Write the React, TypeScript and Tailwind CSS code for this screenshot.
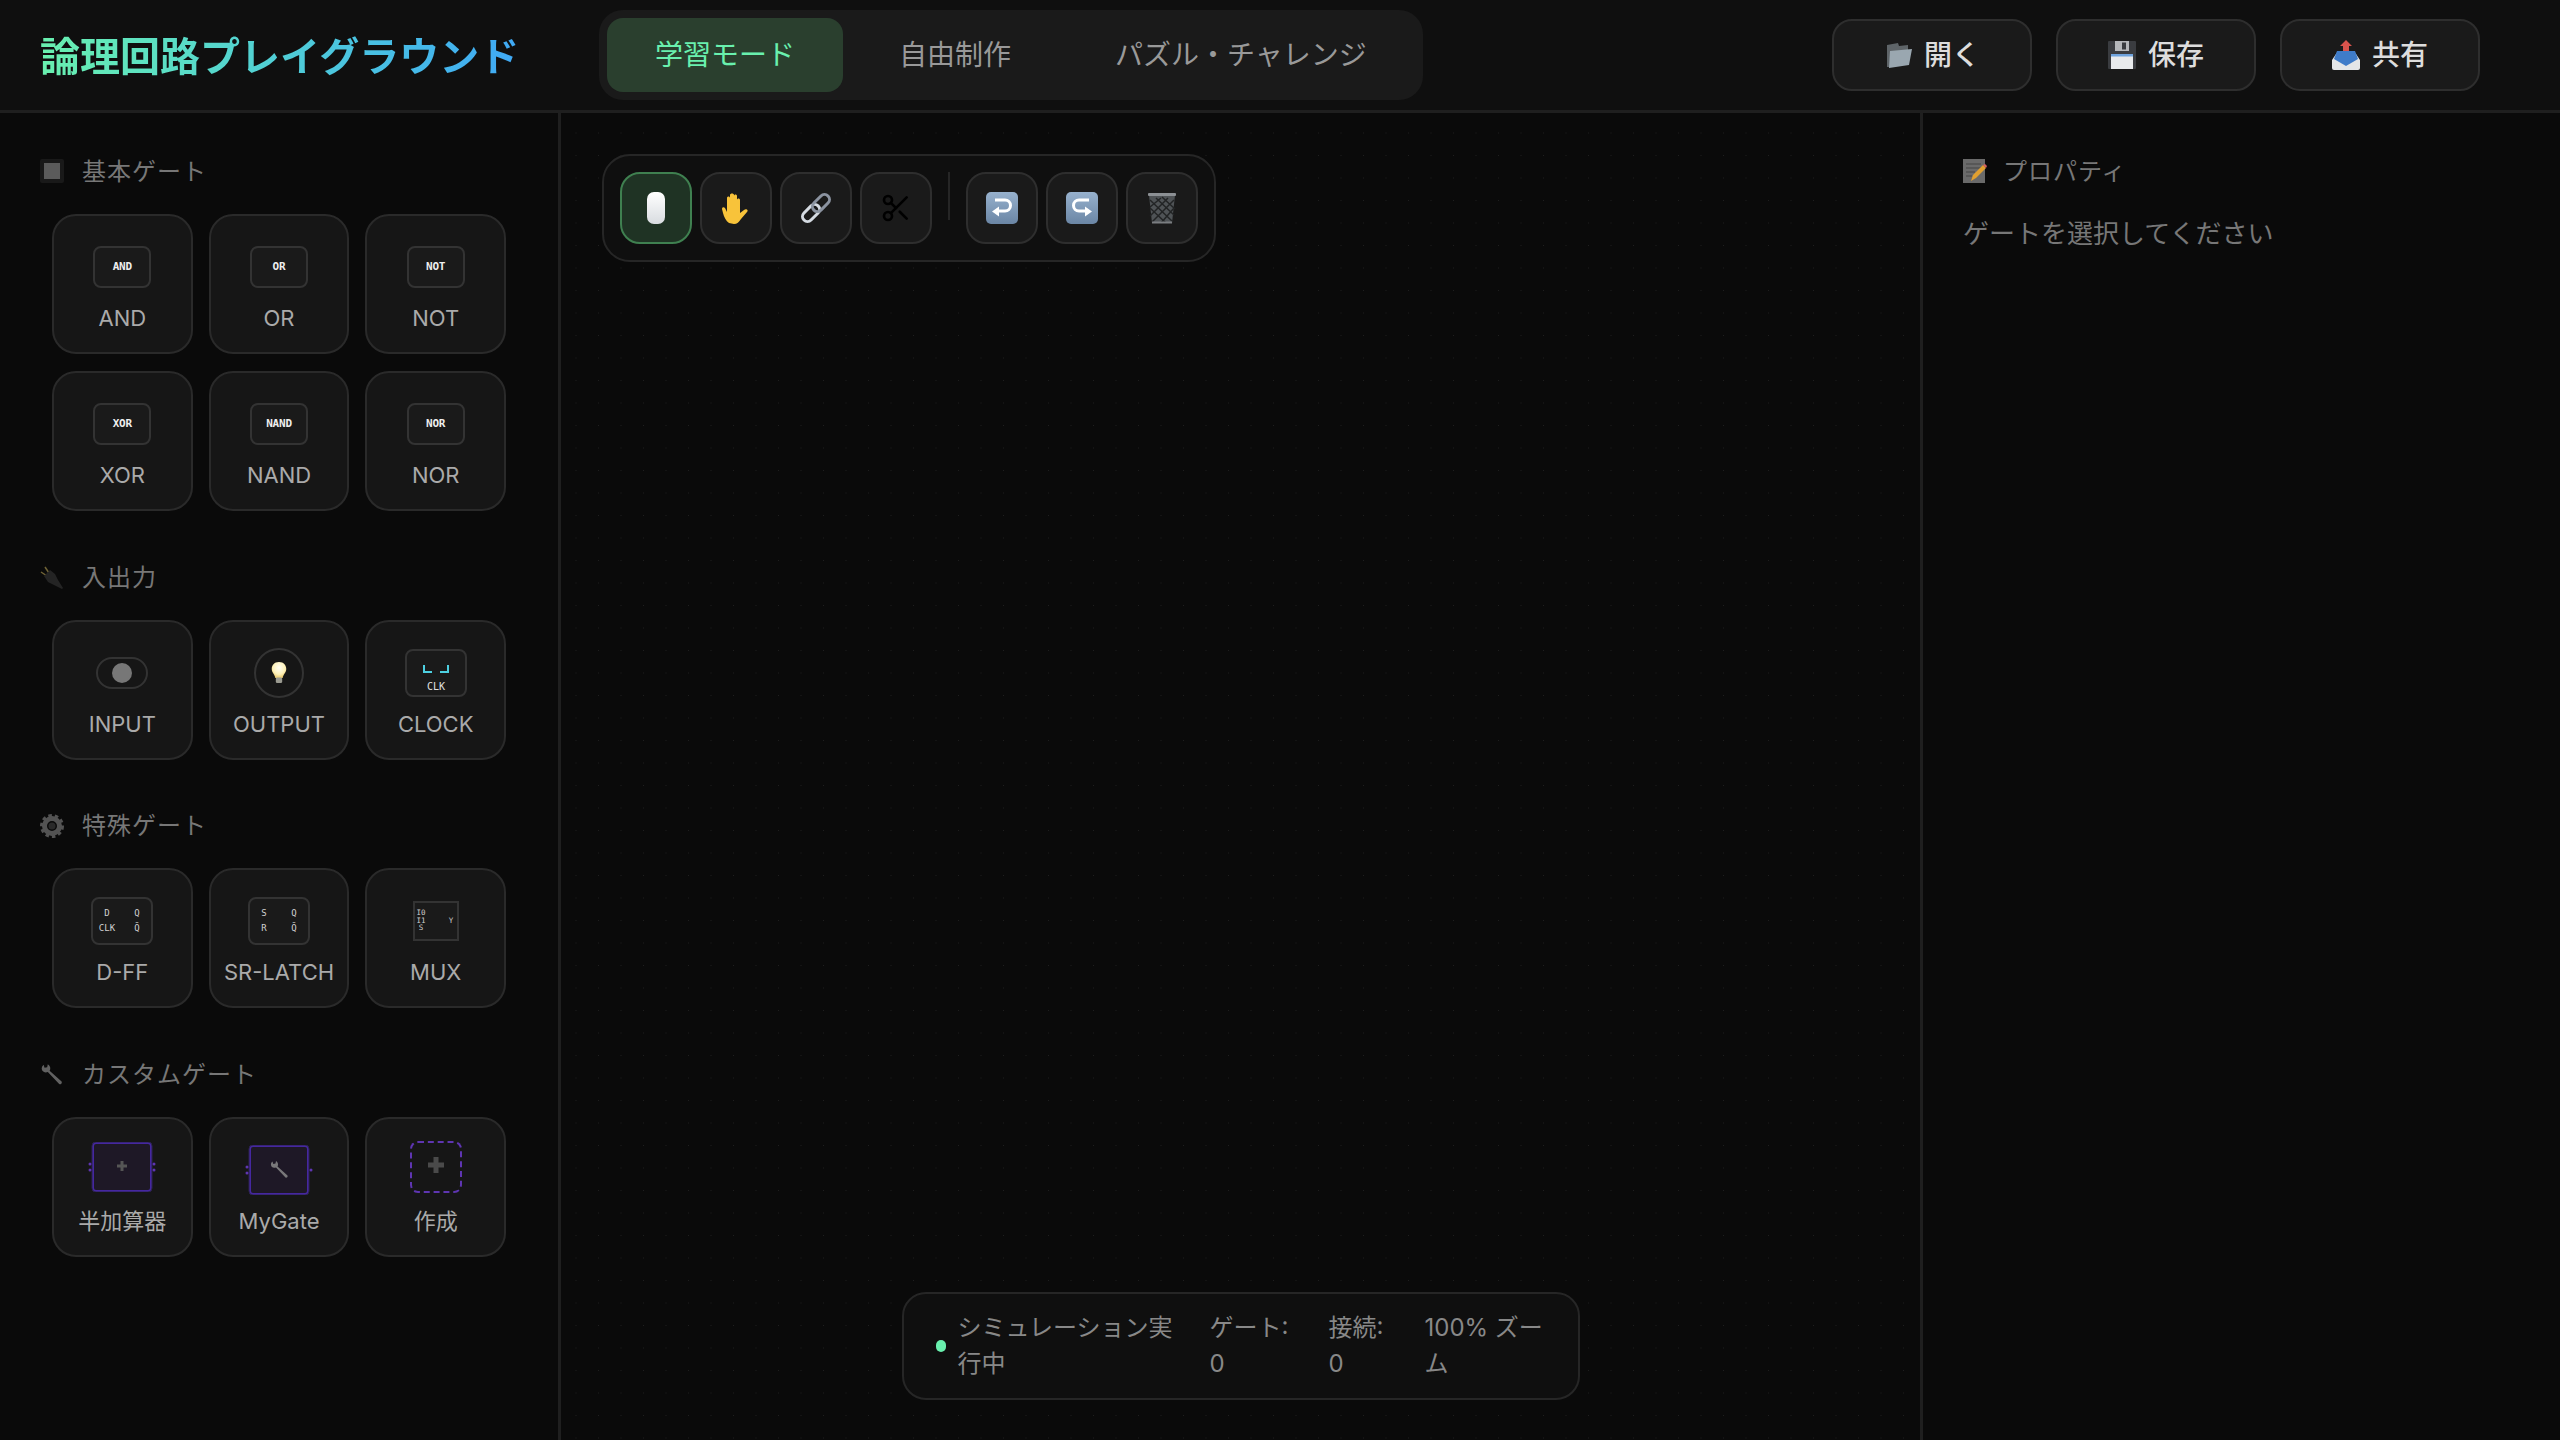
import React from "react";
import { Scissors } from "lucide-react";

const FONT = 'Inter, "Noto Sans CJK JP", sans-serif';

type Gate = { label: string; icon: React.ReactNode };

const TextBox = ({ text }: { text: string }) => (
  <div className="flex h-[42px] w-[58px] items-center justify-center rounded-lg border-2 border-[#333333] bg-[#1a1a1a] font-['DejaVu_Sans_Mono',monospace] text-[11px] font-bold tracking-[-0.2px] text-[#eeeeee]">
    {text}
  </div>
);

const ToggleIcon = () => (
  <div className="flex h-[32px] w-[52px] items-center justify-center rounded-full border-2 border-[#333333]">
    <div className="h-[20px] w-[20px] rounded-full bg-[#777777]" />
  </div>
);

const BulbEmoji = () => (
  <svg width="20" height="24" viewBox="0 0 22 26">
    <defs>
      <radialGradient id="bulb" cx="50%" cy="35%" r="60%">
        <stop offset="0%" stopColor="#fffef5" />
        <stop offset="70%" stopColor="#fdf0b8" />
        <stop offset="100%" stopColor="#efd27a" />
      </radialGradient>
    </defs>
    <path d="M11 1C5.500 1 3 5 3 8.500c0 4 3.500 6 4 10h8c.5-4 4-6 4-10C19 5 16.500 1 11 1z" fill="url(#bulb)" />
    <rect x="7.500" y="18" width="7" height="6" rx="1.500" fill="#9a9a90" />
  </svg>
);

const OutputIcon = () => (
  <div className="flex h-[50px] w-[50px] items-center justify-center rounded-full border-2 border-[#333333]">
    <BulbEmoji />
  </div>
);

const ClockIcon = () => (
  <svg width="62" height="48" viewBox="0 0 62 48">
    <rect x="1" y="1" width="60" height="46" rx="7" fill="#1a1a1a" stroke="#333333" strokeWidth="2" />
    <path d="M19 16v7h8M35 23h8v-7" fill="none" stroke="#4dd0e1" strokeWidth="2" />
    <text x="31" y="41" textAnchor="middle" fontSize="10" fontFamily="DejaVu Sans Mono, monospace" fill="#e0e0e0">CLK</text>
  </svg>
);

const FlipFlopIcon = ({ a, b }: { a: string; b: string }) => (
  <svg width="62" height="48" viewBox="0 0 62 48" fontFamily="DejaVu Sans Mono, monospace" fontSize="9" fill="#d0d0d0" textAnchor="middle">
    <rect x="1" y="1" width="60" height="46" rx="7" fill="#1a1a1a" stroke="#333333" strokeWidth="2" />
    <text x="16" y="19">{a}</text>
    <text x="46" y="19">Q</text>
    <text x="16" y="34">{b}</text>
    <text x="46" y="34">Q̄</text>
  </svg>
);

const MuxIcon = () => (
  <svg width="46" height="40" viewBox="0 0 46 40" fontFamily="DejaVu Sans Mono, monospace" fontSize="7.500" fill="#d0d0d0" textAnchor="middle">
    <rect x="1" y="1" width="44" height="38" fill="#1a1a1a" stroke="#333333" strokeWidth="2" />
    <text x="8" y="14">I0</text>
    <text x="8" y="22">I1</text>
    <text x="8" y="29">S</text>
    <text x="38" y="22">Y</text>
  </svg>
);

const WrenchShape = ({ color }: { color: string }) => (
  <path d="M3 1.500a4 4 0 0 0-1 5 4 4 0 0 0 4.500 1L16 17.500a1.500 1.500 0 0 0 2-2L8 6.500A4 4 0 0 0 6.500 1L6 3.500 3.800 4z" fill={color} />
);

const HalfAdderIcon = () => (
  <svg width="68" height="50" viewBox="0 0 68 50" className="-translate-y-[3px]">
    <rect x="5" y="1" width="58" height="48" rx="3" fill="#1e1826" stroke="#4527a0" strokeWidth="2" />
    <rect x="4" y="0" width="60" height="50" rx="4" fill="none" stroke="#2c2350" strokeWidth="1" />
    <circle cx="2" cy="22" r="1.500" fill="#5e35b1" />
    <circle cx="2" cy="28" r="1.500" fill="#5e35b1" />
    <circle cx="66" cy="22" r="1.500" fill="#5e35b1" />
    <circle cx="66" cy="28" r="1.500" fill="#5e35b1" />
    <path d="M34 19v10M29 24h10" stroke="#555555" strokeWidth="3" />
  </svg>
);

const MyGateIcon = () => (
  <svg width="68" height="50" viewBox="0 0 68 50">
    <rect x="5" y="1" width="58" height="48" rx="3" fill="#1e1826" stroke="#4527a0" strokeWidth="2" />
    <rect x="4" y="0" width="60" height="50" rx="4" fill="none" stroke="#2c2350" strokeWidth="1" />
    <circle cx="2" cy="22" r="1.500" fill="#5e35b1" />
    <circle cx="2" cy="28" r="1.500" fill="#5e35b1" />
    <circle cx="66" cy="25" r="1.500" fill="#5e35b1" />
    <g transform="translate(24.500 15)" opacity="0.85">
      <WrenchShape color="#8a8a8a" />
    </g>
  </svg>
);

const CreateIcon = () => (
  <div className="flex h-[52px] w-[52px] -translate-y-[3px] items-center justify-center rounded-lg border-2 border-dashed border-[#5e35b1]">
    <svg width="18" height="18" viewBox="0 0 18 18" className="-translate-y-[2px]">
      <path d="M9 1v16M1 9h16" stroke="#4a4a4a" strokeWidth="5" />
    </svg>
  </div>
);

const sections: { title: string; icon: React.ReactNode; gates: Gate[] }[] = [
  {
    title: "基本ゲート",
    icon: (
      <svg width="24" height="24" viewBox="0 0 24 24" className="-translate-y-[1px]">
        <rect width="24" height="24" rx="2" fill="#1d1d1d" />
        <rect x="4" y="4" width="16" height="16" fill="#707070" />
      </svg>
    ),
    gates: [
      { label: "AND", icon: <TextBox text="AND" /> },
      { label: "OR", icon: <TextBox text="OR" /> },
      { label: "NOT", icon: <TextBox text="NOT" /> },
      { label: "XOR", icon: <TextBox text="XOR" /> },
      { label: "NAND", icon: <TextBox text="NAND" /> },
      { label: "NOR", icon: <TextBox text="NOR" /> },
    ],
  },
  {
    title: "入出力",
    icon: (
      <svg width="24" height="24" viewBox="0 0 24 24">
        <path d="M1 6l6 4M5 1l4 6" stroke="#8a7a40" strokeWidth="1.500" />
        <path d="M4 10l6-6 5 4 3 6 5 8-1 1-8-4-6-3z" fill="#2b2b2b" />
      </svg>
    ),
    gates: [
      { label: "INPUT", icon: <ToggleIcon /> },
      { label: "OUTPUT", icon: <OutputIcon /> },
      { label: "CLOCK", icon: <ClockIcon /> },
    ],
  },
  {
    title: "特殊ゲート",
    icon: (
      <svg width="24" height="24" viewBox="0 0 24 24">
        <circle cx="12" cy="12" r="7.500" fill="none" stroke="#666666" strokeWidth="5" />
        <circle cx="12" cy="12" r="10.500" fill="none" stroke="#666666" strokeWidth="3" strokeDasharray="3.500 3" />
        <circle cx="12" cy="12" r="3.500" fill="#333333" />
      </svg>
    ),
    gates: [
      { label: "D-FF", icon: <FlipFlopIcon a="D" b="CLK" /> },
      { label: "SR-LATCH", icon: <FlipFlopIcon a="S" b="R" /> },
      { label: "MUX", icon: <MuxIcon /> },
    ],
  },
  {
    title: "カスタムゲート",
    icon: (
      <svg width="24" height="24" viewBox="0 0 20 20">
        <WrenchShape color="#777777" />
      </svg>
    ),
    gates: [
      { label: "半加算器", icon: <HalfAdderIcon /> },
      { label: "MyGate", icon: <MyGateIcon /> },
      { label: "作成", icon: <CreateIcon /> },
    ],
  },
];

const tools: { active?: boolean; icon: React.ReactNode }[] = [
  {
    active: true,
    icon: (
      <svg width="18" height="32" viewBox="0 0 18 32">
        <defs>
          <linearGradient id="mouse" x1="0" y1="0" x2="0" y2="1">
            <stop offset="0%" stopColor="#ffffff" />
            <stop offset="100%" stopColor="#d8dce0" />
          </linearGradient>
        </defs>
        <rect width="18" height="32" rx="7" fill="url(#mouse)" />
      </svg>
    ),
  },
  {
    icon: (
      <svg width="30" height="32" viewBox="0 0 30 32">
        <path
          d="M8 31c-3-2-5-6-6-10l-1-4c0-2 2-2 3-1l2 4V6c0-2 3-2 3 0v8V3c0-2 4-2 4 0v11V4c0-2 3-2 3 0v11-7c0-2 3-2 3 0v13l4-3c2-2 5 0 3 2l-6 7c-2 3-4 5-7 5z"
          fill="#f8c33a"
        />
      </svg>
    ),
  },
  {
    icon: (
      <svg width="32" height="32" viewBox="0 0 32 32" fill="none">
        <g transform="rotate(-45 16 16)" strokeWidth="3">
          <rect x="-1" y="11" width="20" height="10" rx="5" stroke="#d5dbe2" />
          <rect x="13" y="11" width="20" height="10" rx="5" stroke="#8b93a0" />
        </g>
      </svg>
    ),
  },
  { icon: <Scissors size={32} color="#000000" strokeWidth={2} /> },
];

const BlueSquare = ({ d, head }: { d: string; head: string }) => (
  <svg width="32" height="32" viewBox="0 0 32 32">
    <defs>
      <linearGradient id="keycap" x1="0" y1="0" x2="0" y2="1">
        <stop offset="0%" stopColor="#97b1cd" />
        <stop offset="100%" stopColor="#6b86a5" />
      </linearGradient>
    </defs>
    <rect width="32" height="32" rx="5" fill="url(#keycap)" />
    <path d={d} fill="none" stroke="#ffffff" strokeWidth="3" />
    <path d={head} fill="#ffffff" />
  </svg>
);

const editTools: React.ReactNode[] = [
  <BlueSquare d="M9 8h10a5.500 5.500 0 0 1 0 11h-7" head="M6 19.500l7-5v10z" />,
  <BlueSquare d="M23 8H13a5.500 5.500 0 0 0 0 11h7" head="M26 19.500l-7-5v10z" />,
  <svg width="32" height="32" viewBox="0 0 32 32">
    <path d="M3 3h26l-3 28H6z" fill="#4f5356" />
    <path d="M4 8l23 22M10 6l18 17M16 5l13 12M4 16l16 15M28 8L6 30M22 6L4 24M15 6L4 15M28 16L15 31" stroke="#222425" strokeWidth="1.500" />
    <rect x="2" y="1" width="28" height="3" rx="1" fill="#8c9094" />
    <rect x="6" y="29.500" width="20" height="2" fill="#7a7d80" />
  </svg>,
];

const actions: { label: string; icon: React.ReactNode }[] = [
  {
    label: "開く",
    icon: (
      <svg width="28" height="28" viewBox="0 0 28 28">
        <path d="M3 4l11-2 1 3 9-1v6L5 26H3z" fill="#5e6468" />
        <path d="M6 10l22-2-3 16-20 3z" fill="#9aa7b0" />
      </svg>
    ),
  },
  {
    label: "保存",
    icon: (
      <svg width="28" height="28" viewBox="0 0 28 28">
        <rect width="28" height="28" rx="1" fill="#3a3c40" />
        <rect x="7" y="0" width="14" height="10" fill="#b5b7ba" />
        <rect x="14" y="1.500" width="4" height="7" fill="#3a3c40" />
        <rect x="3" y="13" width="22" height="15" fill="#e8eaec" />
        <rect x="3" y="13" width="22" height="2.500" fill="#6fa3dd" />
      </svg>
    ),
  },
  {
    label: "共有",
    icon: (
      <svg width="28" height="30" viewBox="0 0 28 30">
        <path d="M14 0l6 6h-3v6h-6V6H8z" fill="#d9534c" />
        <path d="M6 11h16l6 9v8a2 2 0 0 1-2 2H2a2 2 0 0 1-2-2v-8z" fill="#e4e6e8" />
        <path d="M5 11h18l3 8-12 7-12-7z" fill="#3f7cc9" />
      </svg>
    ),
  },
];

const Card = ({ gate }: { gate: Gate }) => (
  <div className="flex h-[140px] flex-col items-center rounded-3xl border-2 border-[#2a2a2a] bg-[#161616] pt-[23px]">
    <div className="flex h-[56px] items-center justify-center">{gate.icon}</div>
    <div className="mt-[5px] text-[22px] leading-[36px] text-[#aaaaaa]">{gate.label}</div>
  </div>
);

const ToolButton = ({ active, children }: { active?: boolean; children: React.ReactNode }) => (
  <div
    className={`flex h-[72px] w-[72px] items-center justify-center rounded-[20px] border-2 ${
      active ? "border-[#3f8050] bg-[#1f3324]" : "border-[#2e2e2e] bg-[#1a1a1a]"
    }`}
  >
    {children}
  </div>
);

export default function App() {
  return (
    <div className="flex h-screen w-screen flex-col overflow-hidden bg-[#0a0a0a]" style={{ fontFamily: FONT }}>
      <header className="flex h-[113px] shrink-0 items-start border-b-[3px] border-[#1f1f1f] bg-[#0f0f0f] pl-10 pr-20">
        <h1 className="mt-[33px] w-[477px] whitespace-nowrap bg-gradient-to-r from-[#69f0ae] to-[#40a9f5] bg-clip-text text-[40px] font-bold leading-[48px] text-transparent">
          論理回路プレイグラウンド
        </h1>
        <nav className="ml-[82px] mt-[10px] flex gap-2 rounded-3xl bg-[#1a1a1a] p-2 text-[28px] leading-[74px] text-[#999999]">
          <div className="rounded-2xl bg-[#2a3f2e] px-12 text-[#69f0ae]">学習モード</div>
          <div className="px-12">自由制作</div>
          <div className="px-12">パズル・チャレンジ</div>
        </nav>
        <div className="ml-auto mt-[19px] flex gap-6">
          {actions.map((a) => (
            <div
              key={a.label}
              className="flex h-[72px] w-[200px] items-center justify-center gap-3 rounded-[20px] border-2 border-[#2e2e2e] bg-[#1a1a1a] text-[28px] font-medium text-[#dddddd]"
            >
              {a.icon}
              {a.label}
            </div>
          ))}
        </div>
      </header>

      <div className="flex min-h-0 flex-1">
        <aside className="w-[561px] shrink-0 border-r-[3px] border-[#1f1f1f] bg-[#0a0a0a] px-10 pt-[41px]">
          {sections.map((s) => (
            <section key={s.title} className="mb-[48.5px]">
              <div className="mb-[24px] flex h-[36px] items-center gap-[18px] text-[24px] tracking-[1px] text-[#777777]">
                <span className="opacity-80">{s.icon}</span>
                {s.title}
              </div>
              <div className="grid grid-cols-3 gap-x-4 gap-y-[17px] px-3">
                {s.gates.map((g) => (
                  <Card key={g.label} gate={g} />
                ))}
              </div>
            </section>
          ))}
        </aside>

        <main className="relative flex-1 bg-[#0a0a0a] bg-[radial-gradient(circle,#1f1f1f_0.6px,transparent_0.9px)] bg-[size:22.5px_22.5px] bg-[position:3.75px_8.75px]">
          <div className="absolute left-[41px] top-[41px] flex items-start gap-2 rounded-[28px] border-2 border-[#262626] bg-[#0f0f0f] p-4">
            {tools.map((t, i) => (
              <ToolButton key={i} active={t.active}>
                {t.icon}
              </ToolButton>
            ))}
            <div className="mx-2 h-[48px] w-[2px] bg-[#262626]" />
            {editTools.map((t, i) => (
              <ToolButton key={i}>{t}</ToolButton>
            ))}
          </div>

          <div className="absolute bottom-10 left-1/2 flex w-[678px] -translate-x-1/2 items-center gap-9 rounded-3xl border-2 border-[#262626] bg-[#0f0f0f] px-8 py-4 text-[24px] leading-[36px] text-[#888888]">
            <div className="flex shrink-0 items-center gap-3">
              <div className="h-[12px] w-[10px] shrink-0 rounded-full bg-[#69f0ae]" />
              <span className="w-[216px]">シミュレーション実行中</span>
            </div>
            <span className="w-[83px] shrink-0">ゲート: 0</span>
            <span className="w-[60px] shrink-0">接続: 0</span>
            <span className="w-[124px] shrink-0">100% ズーム</span>
          </div>
        </main>

        <aside className="w-[640px] shrink-0 border-l-[3px] border-[#1f1f1f] bg-[#0a0a0a] px-10 pt-[41px]">
          <div className="mb-[24px] flex h-[36px] items-center gap-[16px] text-[24px] tracking-[1px] text-[#777777]">
            <svg width="24" height="24" viewBox="0 0 24 24" className="-translate-y-[1px]">
              <rect width="22" height="24" fill="#6a6a6a" />
              <path d="M3 5h15M3 9h15M3 13h9M3 17h6" stroke="#444444" strokeWidth="1" />
              <path d="M8 22l2-6 10-10 3 3-10 10z" fill="#e0a030" />
              <path d="M20 6l3 3 1-2-2-2z" fill="#d66060" />
            </svg>
            プロパティ
          </div>
          <p className="mt-[26px] text-[26px] leading-[36px] text-[#777777]">ゲートを選択してください</p>
        </aside>
      </div>
    </div>
  );
}
